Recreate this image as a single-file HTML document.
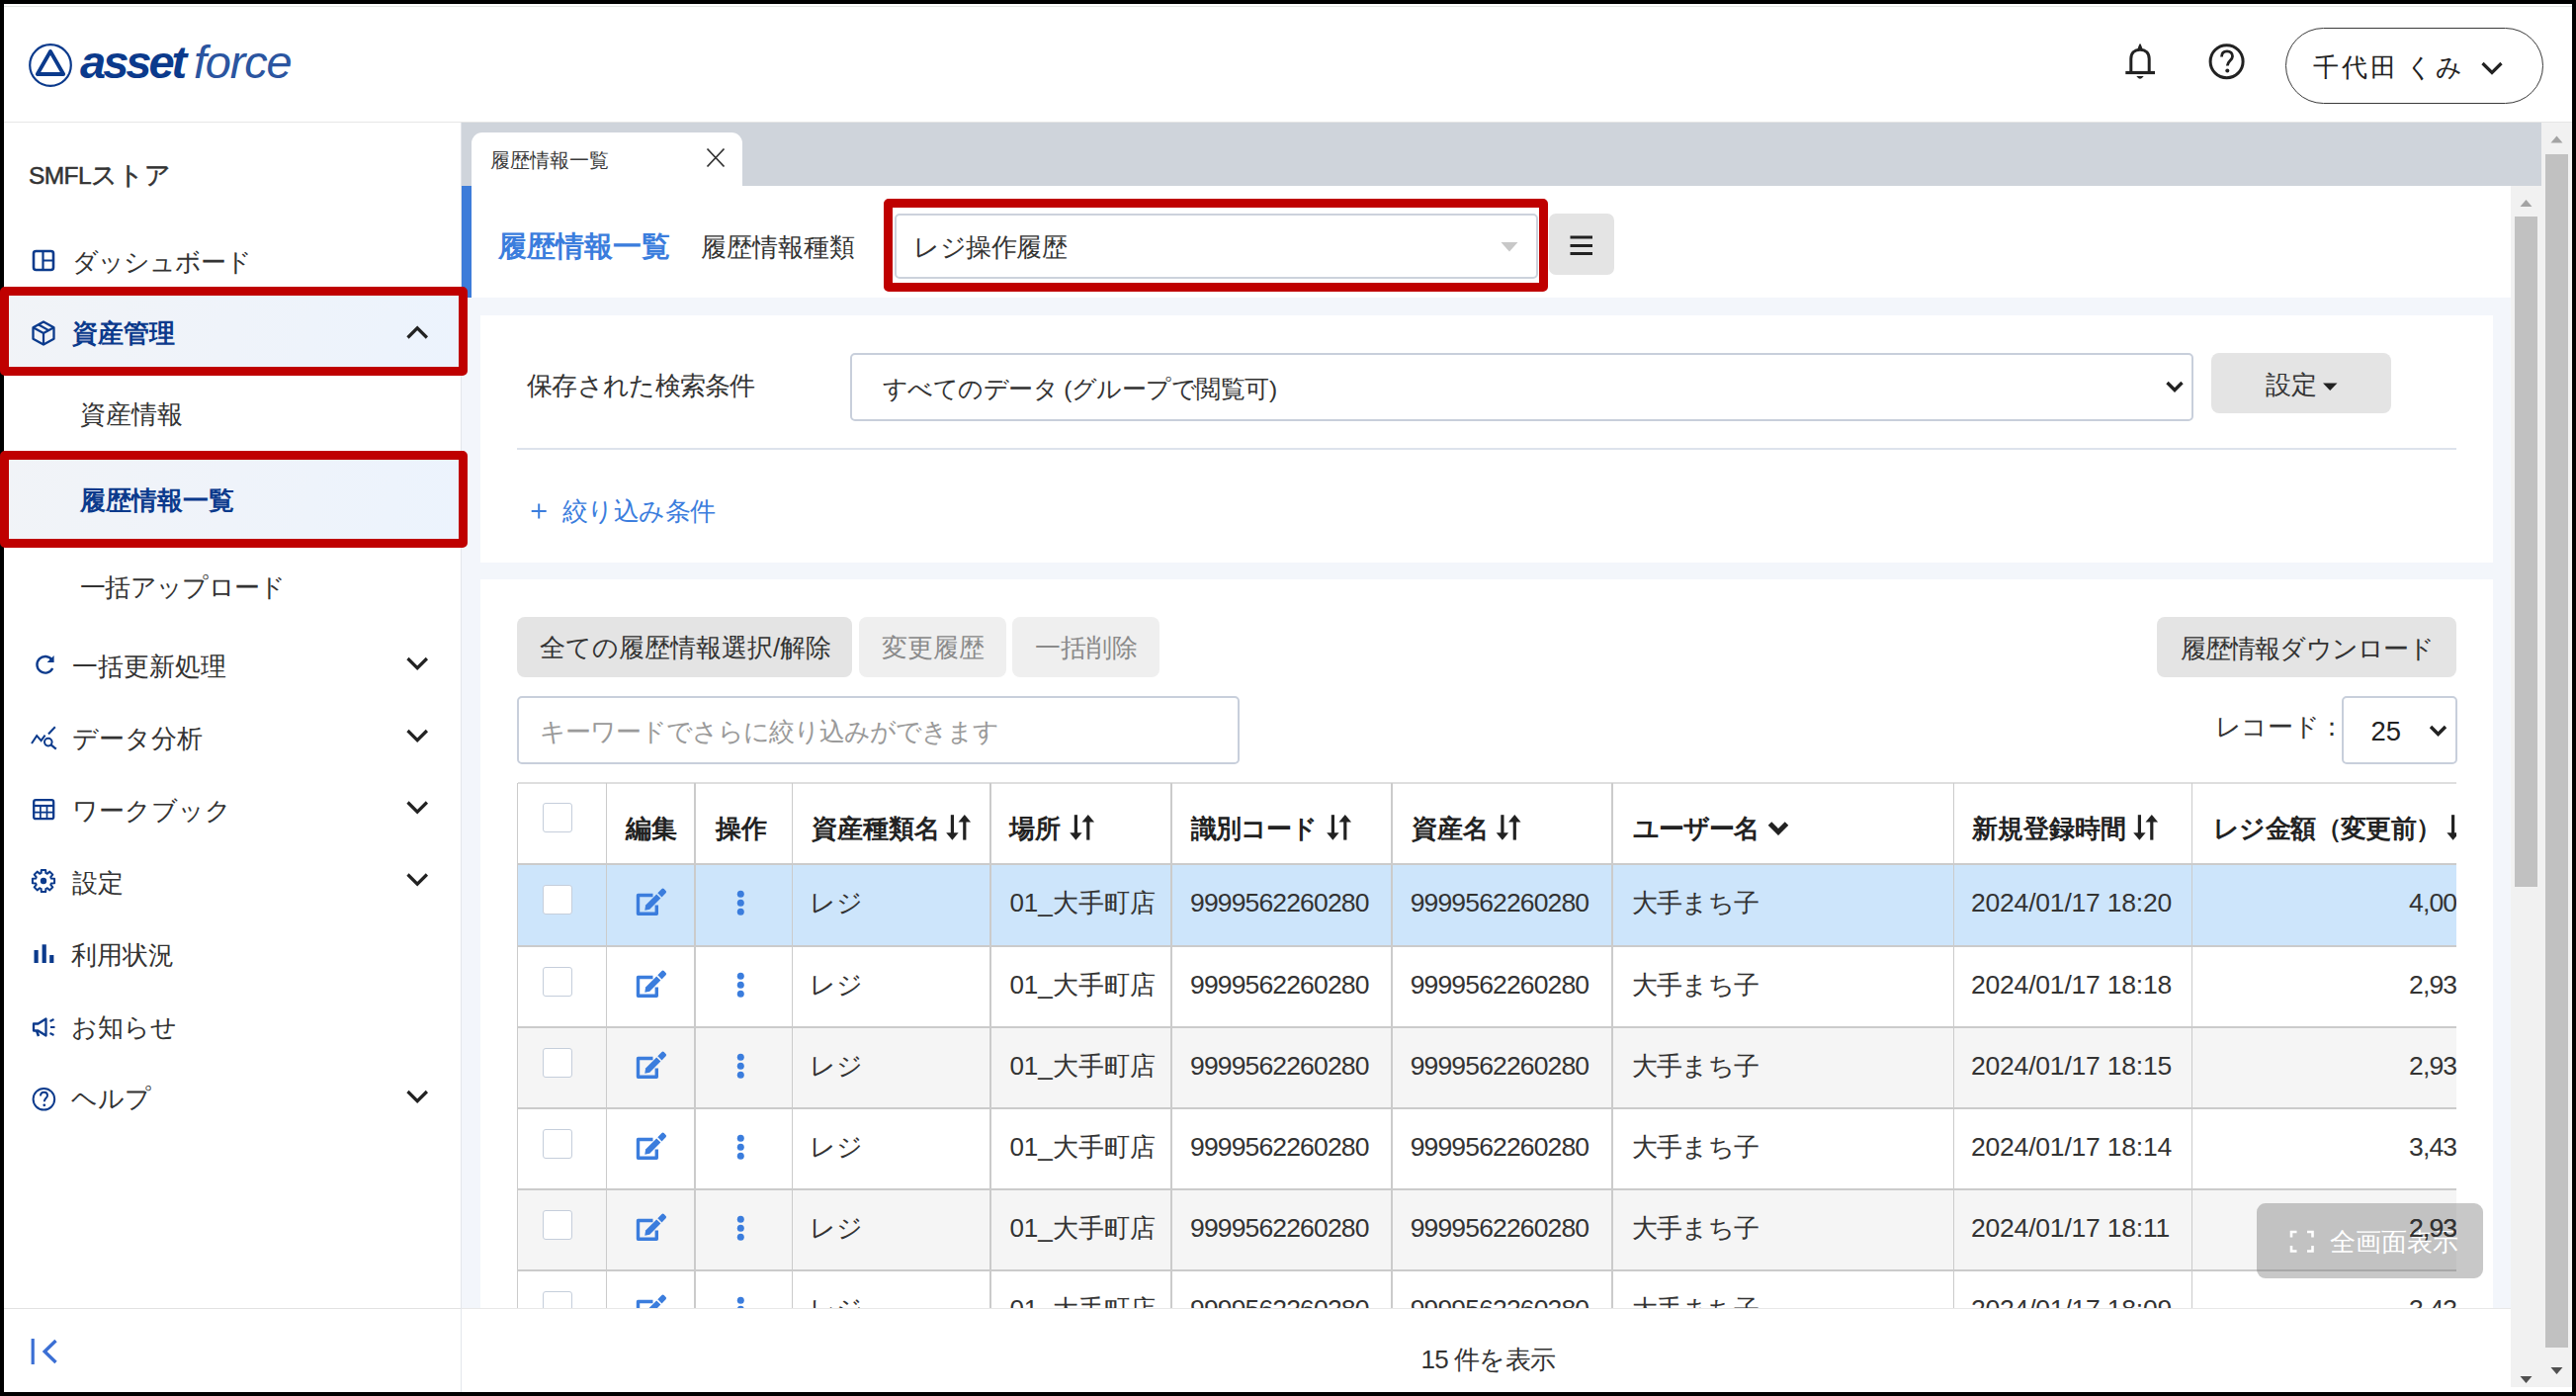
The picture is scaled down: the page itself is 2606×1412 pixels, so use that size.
<!DOCTYPE html>
<html lang="ja">
<head>
<meta charset="utf-8">
<style>
html,body{margin:0;padding:0;}
body{width:2606px;height:1412px;background:#000;position:relative;overflow:hidden;font-family:"Liberation Sans",sans-serif;color:#333;}
.a{position:absolute;}
.t{position:absolute;white-space:nowrap;font-size:26px;line-height:40px;height:40px;}
#app{left:4px;top:4px;width:2598px;height:1404px;background:#fff;overflow:hidden;}
.navy{color:#0b3a8c;}
.blue{color:#3b7ddd;}
.b{font-weight:bold;}
svg{position:absolute;overflow:visible;}
</style>
</head>
<body>
<div id="app" class="a"></div>
<!-- top faint line -->
<div class="a" style="left:4px;top:6px;width:2598px;height:1px;background:#e3e6e3"></div>
<!-- header bottom line -->
<div class="a" style="left:4px;top:123px;width:2598px;height:1px;background:#e6e6e6"></div>

<!-- HEADER -->
<div id="header">
  <svg style="left:0;top:0" width="100" height="100">
    <circle cx="51" cy="66" r="20.8" fill="none" stroke="#0b3a8c" stroke-width="2.2"/>
    <path d="M51 52 L37.8 75 L64.2 75 Z" fill="none" stroke="#0b3a8c" stroke-width="3.8" stroke-linejoin="round"/>
  </svg>
  <div class="t navy" id="lg1" style="left:81px;top:38px;font-size:47px;line-height:50px;height:50px;font-weight:bold;font-style:italic;letter-spacing:-3px">asset</div>
  <div class="t" id="lg2" style="color:#2b55a0;left:196px;top:38px;font-size:47px;line-height:50px;height:50px;font-style:italic;letter-spacing:-1.2px">force</div>

  <!-- bell -->
  <svg style="left:2140px;top:35px" width="50" height="50">
    <path d="M15.8 37 V24.5 C15.8 18.2 19.6 15.2 25 15.2 C30.4 15.2 34.2 18.2 34.2 24.5 V37" fill="none" stroke="#222" stroke-width="3"/>
    <path d="M10.3 38.5 H40" stroke="#222" stroke-width="3.2"/>
    <path d="M23.2 14.5 L25 10 L26.8 14.5 Z" fill="#222" stroke="#222" stroke-width="1.5" stroke-linejoin="round"/>
    <path d="M22.6 42.6 Q25 45.6 27.4 42.6 Z" fill="#222" stroke="#222" stroke-width="1.2"/>
  </svg>
  <!-- help -->
  <svg style="left:2230px;top:40px" width="50" height="50">
    <circle cx="22.6" cy="22.2" r="16.5" fill="none" stroke="#222" stroke-width="3"/>
    <path d="M17.5 17.5 C17.5 13.5 20 11.8 23 11.8 C26.5 11.8 28.5 14 28.5 17 C28.5 21 23.3 21.5 23.3 26.5" fill="none" stroke="#222" stroke-width="2.8"/>
    <circle cx="23.3" cy="31.5" r="2" fill="#222"/>
  </svg>
  <!-- user pill -->
  <div class="a" style="left:2312px;top:28px;width:259px;height:74.5px;border:1.6px solid #3a3a3a;border-radius:40px"></div>
  <div class="t" style="left:2340px;top:48px;color:#222"><span style="letter-spacing:3px">千代田</span><span style="display:inline-block;width:6.5px"></span><span style="letter-spacing:3px">くみ</span></div>
  <svg style="left:2500px;top:55px" width="40" height="30">
    <path d="M11.5 9 L21 18.5 L30.5 9" fill="none" stroke="#222" stroke-width="3.2"/>
  </svg>
</div>

<!-- SIDEBAR -->
<div id="sidebar">
  <div class="a" style="left:466px;top:124px;width:1px;height:1284px;background:#e3e6eb"></div>
  <div class="a" style="left:4px;top:1322.5px;width:462px;height:1px;background:#e2e2e2"></div>
  <div class="t" style="left:29px;top:157px;color:#333;-webkit-text-stroke:0.5px #333"><span style="font-size:24.5px;letter-spacing:-0.6px">SMFL</span>ストア</div>

  <!-- dashboard -->
  <svg style="left:0;top:0" width="1" height="1">
    <rect x="34" y="254" width="20" height="19" rx="2.5" fill="none" stroke="#0b3a8c" stroke-width="2.6"/>
    <path d="M43.5 254 V273 M43.5 263.5 H54" stroke="#0b3a8c" stroke-width="2.2"/>
  </svg>
  <div class="t" style="left:73px;top:244.5px;letter-spacing:-1px">ダッシュボード</div>

  <!-- active parent -->
  <div class="a" style="left:4px;top:290px;width:462px;height:90px;background:linear-gradient(100deg,#f1f3f7 0%,#eff3fa 50%,#ecf3fd 100%)"></div>
  <svg style="left:0;top:0" width="1" height="1">
    <path d="M44 325.5 L54.5 331.2 V342.8 L44 348.5 L33.5 342.8 V331.2 Z" fill="none" stroke="#0b3a8c" stroke-width="2.3" stroke-linejoin="round"/>
    <path d="M33.5 331.2 L44 337 L54.5 331.2 M44 337 V348.5 M38.8 328.3 L49.2 334.1" fill="none" stroke="#0b3a8c" stroke-width="2.2"/>
  </svg>
  <div class="t b navy" style="left:73px;top:317px">資産管理</div>
  <svg style="left:0;top:0" width="1" height="1">
    <path d="M412.5 341.5 L422.2 331.8 L431.9 341.5" fill="none" stroke="#222" stroke-width="3.2"/>
  </svg>

  <div class="t" style="left:81px;top:398.5px">資産情報</div>
  <div class="a" style="left:4px;top:456px;width:462px;height:98px;background:linear-gradient(100deg,#f1f3f7 0%,#eff3fa 50%,#ecf3fd 100%)"></div>
  <div class="t b navy" style="left:81px;top:486px">履歴情報一覧</div>
  <div class="t" style="left:81px;top:573.5px;letter-spacing:-0.7px">一括アップロード</div>

  <!-- refresh -->
  <svg style="left:0;top:0" width="1" height="1">
    <path d="M52.5 667.5 A8.3 8.3 0 1 0 53.2 676" fill="none" stroke="#0b3a8c" stroke-width="2.4"/>
    <path d="M54.6 663 V670 H47.6 Z" fill="#0b3a8c"/>
  </svg>
  <div class="t" style="left:73px;top:654px">一括更新処理</div>
  <!-- analytics -->
  <svg style="left:0;top:0" width="1" height="1">
    <path d="M32 752 L37.2 744.2 L41.6 749.2 L45.6 743.6" fill="none" stroke="#0b3a8c" stroke-width="2" stroke-linejoin="miter"/>
    <path d="M49 742.5 L55.8 735.2" fill="none" stroke="#0b3a8c" stroke-width="2"/>
    <circle cx="48.8" cy="750.6" r="3.8" fill="none" stroke="#0b3a8c" stroke-width="2"/>
    <path d="M51.6 753.4 L56.8 757.6" stroke="#0b3a8c" stroke-width="2.2"/>
  </svg>
  <div class="t" style="left:73px;top:727px">データ分析</div>
  <!-- workbook -->
  <svg style="left:0;top:0" width="1" height="1">
    <rect x="34.2" y="809.2" width="20" height="19" rx="2" fill="none" stroke="#0b3a8c" stroke-width="2.3"/>
    <path d="M34.2 815 H54.2" stroke="#0b3a8c" stroke-width="2.2"/>
    <path d="M34.2 821.6 H54.2 M40.9 815 V828.2 M47.5 815 V828.2" stroke="#0b3a8c" stroke-width="1.7"/>
  </svg>
  <div class="t" style="left:73px;top:799.5px">ワークブック</div>
  <!-- gear -->
  <svg style="left:0;top:0" width="1" height="1">
    <g transform="translate(44,891)">
      <path d="M-3.14 -7.58 L-2.40 -7.84 L-2.16 -11.09 L2.16 -11.09 L2.40 -7.84 L3.14 -7.58 L3.85 -7.24 L6.32 -9.37 L9.37 -6.32 L7.24 -3.85 L7.58 -3.14 L7.84 -2.40 L11.09 -2.16 L11.09 2.16 L7.84 2.40 L7.58 3.14 L7.24 3.85 L9.37 6.32 L6.32 9.37 L3.85 7.24 L3.14 7.58 L2.40 7.84 L2.16 11.09 L-2.16 11.09 L-2.40 7.84 L-3.14 7.58 L-3.85 7.24 L-6.32 9.37 L-9.37 6.32 L-7.24 3.85 L-7.58 3.14 L-7.84 2.40 L-11.09 2.16 L-11.09 -2.16 L-7.84 -2.40 L-7.58 -3.14 L-7.24 -3.85 L-9.37 -6.32 L-6.32 -9.37 L-3.85 -7.24 Z" fill="none" stroke="#0b3a8c" stroke-width="2" stroke-linejoin="round"/>
      <circle cx="0" cy="0" r="3.2" fill="#0b3a8c"/>
    </g>
  </svg>
  <div class="t" style="left:73px;top:872.5px">設定</div>
  <!-- bar chart -->
  <svg style="left:0;top:0" width="1" height="1">
    <rect x="34.5" y="961" width="4.2" height="13" fill="#0b3a8c"/>
    <rect x="42.6" y="955.3" width="4.2" height="18.7" fill="#0b3a8c"/>
    <rect x="50.2" y="966" width="4.2" height="8" fill="#0b3a8c"/>
  </svg>
  <div class="t" style="left:72px;top:945.7px">利用状況</div>
  <!-- megaphone -->
  <svg style="left:0;top:0" width="1" height="1">
    <path d="M34 1035.5 H38.5 L46.5 1030.5 V1047.5 L38.5 1042.5 H34 Z" fill="none" stroke="#0b3a8c" stroke-width="2.3" stroke-linejoin="round"/>
    <path d="M37 1042.5 L39 1048" stroke="#0b3a8c" stroke-width="2.5"/>
    <path d="M50.5 1033 L54.5 1031 M51 1039 H55.5 M50.5 1045 L54.5 1047" stroke="#0b3a8c" stroke-width="2"/>
  </svg>
  <div class="t" style="left:72px;top:1019px">お知らせ</div>
  <!-- help -->
  <svg style="left:0;top:0" width="1" height="1">
    <circle cx="44.4" cy="1111.8" r="10.8" fill="none" stroke="#0b3a8c" stroke-width="2"/>
    <path d="M41 1108.5 C41 1105.8 42.6 1104.7 44.5 1104.7 C46.8 1104.7 48 1106.2 48 1108 C48 1110.7 44.8 1111 44.8 1114.2" fill="none" stroke="#0b3a8c" stroke-width="2"/>
    <circle cx="44.8" cy="1117.8" r="1.4" fill="#0b3a8c"/>
  </svg>
  <div class="t" style="left:72px;top:1091px">ヘルプ</div>

  <!-- chevrons -->
  <svg style="left:0;top:0" width="1" height="1">
    <g fill="none" stroke="#222" stroke-width="3.2">
      <path d="M412.5 666 L422.2 675.7 L431.9 666"/>
      <path d="M412.5 739 L422.2 748.7 L431.9 739"/>
      <path d="M412.5 811.5 L422.2 821.2 L431.9 811.5"/>
      <path d="M412.5 884.5 L422.2 894.2 L431.9 884.5"/>
      <path d="M412.5 1104 L422.2 1113.7 L431.9 1104"/>
    </g>
  </svg>
  <!-- collapse -->
  <svg style="left:0;top:0" width="1" height="1">
    <path d="M33.2 1354 V1380" stroke="#3b6fd4" stroke-width="3.2"/>
    <path d="M56.5 1356 L45.2 1367 L56.5 1378" fill="none" stroke="#3b6fd4" stroke-width="3.4"/>
  </svg>

</div>

<!-- MAIN -->
<div id="main">
  <!-- tab bar -->
  <div class="a" style="left:467px;top:124px;width:2104px;height:64px;background:#cfd4db"></div>
  <div class="a" style="left:477px;top:133.5px;width:274px;height:55px;background:#fff;border-radius:11px 11px 0 0"></div>
  <div class="t" style="left:495.5px;top:142px;font-size:20px;color:#3a3a3a">履歴情報一覧</div>
  <svg style="left:0;top:0" width="1" height="1">
    <path d="M715.5 150.5 L732.5 168.5 M732.5 150.5 L715.5 168.5" stroke="#333" stroke-width="1.8"/>
  </svg>

  <!-- content bg -->
  <div class="a" style="left:467px;top:188px;width:2073px;height:1135px;background:#f3f6fb"></div>
  <!-- page header -->
  <div class="a" style="left:467px;top:188px;width:2073px;height:113px;background:#fff"></div>
  <div class="a" style="left:467px;top:188px;width:10px;height:113px;background:#3d7cd9"></div>
  <div class="t b blue" style="left:504px;top:229px;font-size:29px">履歴情報一覧</div>
  <div class="t" style="left:709px;top:230px;color:#333">履歴情報種類</div>
  <div class="a" style="left:905px;top:216px;width:646.5px;height:61.5px;border:2px solid #ccd2dc;border-radius:5px;background:#fff"></div>
  <div class="t" style="left:924px;top:230px;color:#333;letter-spacing:-0.5px">レジ操作履歴</div>
  <svg style="left:0;top:0" width="1" height="1">
    <path d="M1518.5 245 H1535.5 L1527 254.5 Z" fill="#c8c8c8"/>
  </svg>
  <div class="a" style="left:894px;top:201px;width:654px;height:76px;border:9px solid #bf0000;border-radius:5px"></div>
  <div class="a" style="left:1567px;top:216px;width:66px;height:62px;background:#e4e4e4;border-radius:7px"></div>
  <svg style="left:0;top:0" width="1" height="1">
    <path d="M1588.5 240 H1611 M1588.5 248.5 H1611 M1588.5 256.5 H1611" stroke="#222" stroke-width="3.2"/>
  </svg>

  <!-- card 1 -->
  <div class="a" style="left:486px;top:319px;width:2036px;height:250px;background:#fff"></div>
  <div class="t" style="left:533px;top:370px;color:#333;letter-spacing:-0.7px">保存された検索条件</div>
  <div class="a" style="left:860px;top:357px;width:1355px;height:65px;border:2px solid #c8cfdb;border-radius:5px;background:#fff"></div>
  <div class="t" style="left:892.5px;top:374px;color:#333;font-size:24.5px;letter-spacing:-0.5px">すべてのデータ (グループで閲覧可)</div>
  <svg style="left:0;top:0" width="1" height="1">
    <path d="M2192.5 387 L2200 394.5 L2207.5 387" fill="none" stroke="#222" stroke-width="3.4"/>
  </svg>
  <div class="a" style="left:2237px;top:357px;width:182px;height:61px;background:#e4e4e4;border-radius:8px"></div>
  <div class="t" style="left:2292px;top:369px;color:#333">設定</div>
  <svg style="left:0;top:0" width="1" height="1">
    <path d="M2350 387.5 H2364.5 L2357.2 395 Z" fill="#222"/>
  </svg>
  <div class="a" style="left:522.5px;top:453px;width:1962.5px;height:1.5px;background:#dde3ec"></div>
  <svg style="left:0;top:0" width="1" height="1">
    <path d="M545.2 509.5 V524.6 M537.7 517 H552.7" stroke="#3b7ddd" stroke-width="2"/>
  </svg>
  <div class="t blue" style="left:569px;top:496.5px;letter-spacing:-0.6px">絞り込み条件</div>

  <!-- card 2 -->
  <div class="a" style="left:486px;top:586px;width:2036px;height:737px;background:#fff"></div>
  <div class="a" style="left:523px;top:624px;width:339px;height:61px;background:#e4e4e4;border-radius:8px"></div>
  <div class="t" style="left:546px;top:635px;color:#333">全ての履歴情報選択/解除</div>
  <div class="a" style="left:869px;top:624px;width:149px;height:61px;background:#efefef;border-radius:8px"></div>
  <div class="t" style="left:891.5px;top:635px;color:#8a8a8a">変更履歴</div>
  <div class="a" style="left:1024px;top:624px;width:149px;height:61px;background:#efefef;border-radius:8px"></div>
  <div class="t" style="left:1046.5px;top:635px;color:#8a8a8a">一括削除</div>
  <div class="a" style="left:2182px;top:623.5px;width:303px;height:61px;background:#e4e4e4;border-radius:8px"></div>
  <div class="t" style="left:2205.5px;top:636px;color:#333;letter-spacing:-0.8px">履歴情報ダウンロード</div>

  <div class="a" style="left:523px;top:704px;width:726.8px;height:64.8px;border:2px solid #c8cfdb;border-radius:5px;background:#fff"></div>
  <div class="t" style="left:546px;top:720px;color:#9a9a9a;letter-spacing:-1px">キーワードでさらに絞り込みができます</div>
  <div class="t" style="left:2240.5px;top:715px;color:#333;letter-spacing:-0.3px">レコード：</div>
  <div class="a" style="left:2369px;top:704px;width:112.8px;height:64.8px;border:2px solid #c8cfdb;border-radius:5px;background:#fff"></div>
  <div class="t" style="left:2398.5px;top:719.5px;color:#222;font-size:27.4px">25</div>
  <svg style="left:0;top:0" width="1" height="1">
    <path d="M2459 735 L2466.5 742.5 L2474 735" fill="none" stroke="#222" stroke-width="3.4"/>
  </svg>

  <!-- TABLE -->
  <div id="tbl" class="a" style="left:523px;top:791px;width:1962px;height:532px;overflow:hidden">
<div class="a" style="left:0.6px;top:1.0px;width:2000.0px;height:82.0px;background:#fff"></div>
<div class="a" style="left:0.6px;top:83.0px;width:2000.0px;height:83.0px;background:#cde5fb"></div>
<div class="a" style="left:0.6px;top:166.0px;width:2000.0px;height:82.0px;background:#fff"></div>
<div class="a" style="left:0.6px;top:248.0px;width:2000.0px;height:82.0px;background:#f5f5f5"></div>
<div class="a" style="left:0.6px;top:330.0px;width:2000.0px;height:82.0px;background:#fff"></div>
<div class="a" style="left:0.6px;top:412.0px;width:2000.0px;height:82.0px;background:#f5f5f5"></div>
<div class="a" style="left:0.6px;top:494.0px;width:2000.0px;height:82.0px;background:#fff"></div>
<div class="a" style="left:0.6px;top:0.2px;width:2000.0px;height:1.5px;background:#dedede"></div>
<div class="a" style="left:0.6px;top:82.2px;width:2000.0px;height:1.5px;background:#cbcbcb"></div>
<div class="a" style="left:0.6px;top:165.2px;width:2000.0px;height:1.5px;background:#cbcbcb"></div>
<div class="a" style="left:0.6px;top:247.2px;width:2000.0px;height:1.5px;background:#cbcbcb"></div>
<div class="a" style="left:0.6px;top:329.2px;width:2000.0px;height:1.5px;background:#cbcbcb"></div>
<div class="a" style="left:0.6px;top:411.2px;width:2000.0px;height:1.5px;background:#cbcbcb"></div>
<div class="a" style="left:0.6px;top:493.2px;width:2000.0px;height:1.5px;background:#cbcbcb"></div>
<div class="a" style="left:0.6px;top:575.2px;width:2000.0px;height:1.5px;background:#cbcbcb"></div>
<div class="a" style="left:-0.1px;top:1.0px;width:1.5px;height:700.0px;background:#cbcbcb"></div>
<div class="a" style="left:89.5px;top:1.0px;width:1.5px;height:700.0px;background:#cbcbcb"></div>
<div class="a" style="left:179.0px;top:1.0px;width:1.5px;height:700.0px;background:#cbcbcb"></div>
<div class="a" style="left:277.5px;top:1.0px;width:1.5px;height:700.0px;background:#cbcbcb"></div>
<div class="a" style="left:478.2px;top:1.0px;width:1.5px;height:700.0px;background:#cbcbcb"></div>
<div class="a" style="left:661.2px;top:1.0px;width:1.5px;height:700.0px;background:#cbcbcb"></div>
<div class="a" style="left:884.2px;top:1.0px;width:1.5px;height:700.0px;background:#cbcbcb"></div>
<div class="a" style="left:1107.0px;top:1.0px;width:1.5px;height:700.0px;background:#cbcbcb"></div>
<div class="a" style="left:1452.5px;top:1.0px;width:1.5px;height:700.0px;background:#cbcbcb"></div>
<div class="a" style="left:1693.8px;top:1.0px;width:1.5px;height:700.0px;background:#cbcbcb"></div>
<div class="a" style="left:26.0px;top:21.0px;width:30.0px;height:30.0px;border:1.5px solid #c5cedb;border-radius:3px;box-sizing:border-box;background:#fff"></div>
<div class="t" style="left:110.3px;top:27.0px;font-weight:bold;color:#222">編集</div>
<div class="t" style="left:200.5px;top:27.0px;font-weight:bold;color:#222">操作</div>
<div class="t" style="left:297.6px;top:27.0px;font-weight:bold;color:#222">資産種類名</div>
<div class="t" style="left:498.4px;top:27.0px;font-weight:bold;color:#222">場所</div>
<div class="t" style="left:682.0px;top:27.0px;font-weight:bold;color:#222;letter-spacing:-1px">識別コード</div>
<div class="t" style="left:904.7px;top:27.0px;font-weight:bold;color:#222">資産名</div>
<div class="t" style="left:1128.5px;top:27.0px;font-weight:bold;color:#222;letter-spacing:-0.8px">ユーザー名</div>
<div class="t" style="left:1472.0px;top:27.0px;font-weight:bold;color:#222">新規登録時間</div>
<div class="t" style="left:1716.0px;top:27.0px;font-weight:bold;color:#222;letter-spacing:-0.6px">レジ金額（変更前）</div>
<svg style="left:-523px;top:-791px" width="1" height="1"><g transform="translate(0.0,0)" fill="#222"><rect x="961.8" y="824.2" width="3.2" height="20"/><path d="M957.2 842.3 H969.6 L963.4 849.8 Z"/><rect x="974.2" y="830" width="3.2" height="19.6"/><path d="M969.5 831.6 H982.1 L975.8 824 Z"/></g></svg>
<svg style="left:-523px;top:-791px" width="1" height="1"><g transform="translate(125.0,0)" fill="#222"><rect x="961.8" y="824.2" width="3.2" height="20"/><path d="M957.2 842.3 H969.6 L963.4 849.8 Z"/><rect x="974.2" y="830" width="3.2" height="19.6"/><path d="M969.5 831.6 H982.1 L975.8 824 Z"/></g></svg>
<svg style="left:-523px;top:-791px" width="1" height="1"><g transform="translate(385.0,0)" fill="#222"><rect x="961.8" y="824.2" width="3.2" height="20"/><path d="M957.2 842.3 H969.6 L963.4 849.8 Z"/><rect x="974.2" y="830" width="3.2" height="19.6"/><path d="M969.5 831.6 H982.1 L975.8 824 Z"/></g></svg>
<svg style="left:-523px;top:-791px" width="1" height="1"><g transform="translate(556.5,0)" fill="#222"><rect x="961.8" y="824.2" width="3.2" height="20"/><path d="M957.2 842.3 H969.6 L963.4 849.8 Z"/><rect x="974.2" y="830" width="3.2" height="19.6"/><path d="M969.5 831.6 H982.1 L975.8 824 Z"/></g></svg>
<svg style="left:-523px;top:-791px" width="1" height="1"><g transform="translate(1201.0,0)" fill="#222"><rect x="961.8" y="824.2" width="3.2" height="20"/><path d="M957.2 842.3 H969.6 L963.4 849.8 Z"/><rect x="974.2" y="830" width="3.2" height="19.6"/><path d="M969.5 831.6 H982.1 L975.8 824 Z"/></g></svg>
<svg style="left:-523px;top:-791px" width="1" height="1"><g fill="#222"><rect x="2480" y="824.2" width="3.2" height="20"/><path d="M2475.4 842.3 H2487.8 L2481.6 849.8 Z"/></g></svg>
<svg style="left:-523px;top:-791px" width="1" height="1"><path d="M1790.5 833 L1799 841.5 L1807.5 833" fill="none" stroke="#222" stroke-width="5" stroke-linejoin="miter"/></svg>
<div class="a" style="left:26.0px;top:103.5px;width:30.0px;height:30.0px;border:1.5px solid #c5cedb;border-radius:3px;box-sizing:border-box;background:#fff"></div>
<svg style="left:-523px;top:-791px" width="1" height="1"><g transform="translate(0,0)"><path d="M660.5 905.5 H645.5 V924.3 H664.3 V915.5" fill="none" stroke="#3b7ddd" stroke-width="3.4" stroke-linejoin="round"/><path d="M652.3 920.8 L653.1 915.5 L664.2 904.4 L668.4 908.6 L657.3 919.7 Z" fill="#3b7ddd"/><path d="M665.3 903.3 L669.5 899.1 Q670.6 898 671.7 899.1 L673.6 901 Q674.7 902.1 673.6 903.2 L669.5 907.5 Z" fill="#3b7ddd"/></g></svg>
<svg style="left:-523px;top:-791px" width="1" height="1"><g fill="#3b7ddd"><circle cx="749.3" cy="904.3" r="3.5"/><circle cx="749.3" cy="913.3" r="3.5"/><circle cx="749.3" cy="922.2" r="3.5"/></g></svg>
<div class="t" style="left:296.0px;top:102.0px;color:#333">レジ</div>
<div class="t" style="left:498.4px;top:102.0px;color:#333">01_大手町店</div>
<div class="t" style="left:681.0px;top:102.0px;color:#333;font-size:26.5px;letter-spacing:-0.85px">9999562260280</div>
<div class="t" style="left:903.7px;top:102.0px;color:#333;font-size:26.5px;letter-spacing:-0.85px">9999562260280</div>
<div class="t" style="left:1127.5px;top:102.0px;color:#333;letter-spacing:-0.6px">大手まち子</div>
<div class="t" style="left:1471.0px;top:102.0px;color:#333;font-size:26.5px;letter-spacing:-0.2px">2024/01/17 18:20</div>
<div class="t" style="left:1914.0px;top:102.0px;color:#333;font-size:26.5px;letter-spacing:-0.85px">4,000</div>
<div class="a" style="left:26.0px;top:186.5px;width:30.0px;height:30.0px;border:1.5px solid #c5cedb;border-radius:3px;box-sizing:border-box;background:#fff"></div>
<svg style="left:-523px;top:-791px" width="1" height="1"><g transform="translate(0,83)"><path d="M660.5 905.5 H645.5 V924.3 H664.3 V915.5" fill="none" stroke="#3b7ddd" stroke-width="3.4" stroke-linejoin="round"/><path d="M652.3 920.8 L653.1 915.5 L664.2 904.4 L668.4 908.6 L657.3 919.7 Z" fill="#3b7ddd"/><path d="M665.3 903.3 L669.5 899.1 Q670.6 898 671.7 899.1 L673.6 901 Q674.7 902.1 673.6 903.2 L669.5 907.5 Z" fill="#3b7ddd"/></g></svg>
<svg style="left:-523px;top:-791px" width="1" height="1"><g fill="#3b7ddd"><circle cx="749.3" cy="987.3" r="3.5"/><circle cx="749.3" cy="996.3" r="3.5"/><circle cx="749.3" cy="1005.2" r="3.5"/></g></svg>
<div class="t" style="left:296.0px;top:185.0px;color:#333">レジ</div>
<div class="t" style="left:498.4px;top:185.0px;color:#333">01_大手町店</div>
<div class="t" style="left:681.0px;top:185.0px;color:#333;font-size:26.5px;letter-spacing:-0.85px">9999562260280</div>
<div class="t" style="left:903.7px;top:185.0px;color:#333;font-size:26.5px;letter-spacing:-0.85px">9999562260280</div>
<div class="t" style="left:1127.5px;top:185.0px;color:#333;letter-spacing:-0.6px">大手まち子</div>
<div class="t" style="left:1471.0px;top:185.0px;color:#333;font-size:26.5px;letter-spacing:-0.2px">2024/01/17 18:18</div>
<div class="t" style="left:1914.0px;top:185.0px;color:#333;font-size:26.5px;letter-spacing:-0.85px">2,930</div>
<div class="a" style="left:26.0px;top:268.5px;width:30.0px;height:30.0px;border:1.5px solid #c5cedb;border-radius:3px;box-sizing:border-box;background:#fff"></div>
<svg style="left:-523px;top:-791px" width="1" height="1"><g transform="translate(0,165)"><path d="M660.5 905.5 H645.5 V924.3 H664.3 V915.5" fill="none" stroke="#3b7ddd" stroke-width="3.4" stroke-linejoin="round"/><path d="M652.3 920.8 L653.1 915.5 L664.2 904.4 L668.4 908.6 L657.3 919.7 Z" fill="#3b7ddd"/><path d="M665.3 903.3 L669.5 899.1 Q670.6 898 671.7 899.1 L673.6 901 Q674.7 902.1 673.6 903.2 L669.5 907.5 Z" fill="#3b7ddd"/></g></svg>
<svg style="left:-523px;top:-791px" width="1" height="1"><g fill="#3b7ddd"><circle cx="749.3" cy="1069.3" r="3.5"/><circle cx="749.3" cy="1078.3" r="3.5"/><circle cx="749.3" cy="1087.2" r="3.5"/></g></svg>
<div class="t" style="left:296.0px;top:267.0px;color:#333">レジ</div>
<div class="t" style="left:498.4px;top:267.0px;color:#333">01_大手町店</div>
<div class="t" style="left:681.0px;top:267.0px;color:#333;font-size:26.5px;letter-spacing:-0.85px">9999562260280</div>
<div class="t" style="left:903.7px;top:267.0px;color:#333;font-size:26.5px;letter-spacing:-0.85px">9999562260280</div>
<div class="t" style="left:1127.5px;top:267.0px;color:#333;letter-spacing:-0.6px">大手まち子</div>
<div class="t" style="left:1471.0px;top:267.0px;color:#333;font-size:26.5px;letter-spacing:-0.2px">2024/01/17 18:15</div>
<div class="t" style="left:1914.0px;top:267.0px;color:#333;font-size:26.5px;letter-spacing:-0.85px">2,930</div>
<div class="a" style="left:26.0px;top:350.5px;width:30.0px;height:30.0px;border:1.5px solid #c5cedb;border-radius:3px;box-sizing:border-box;background:#fff"></div>
<svg style="left:-523px;top:-791px" width="1" height="1"><g transform="translate(0,247)"><path d="M660.5 905.5 H645.5 V924.3 H664.3 V915.5" fill="none" stroke="#3b7ddd" stroke-width="3.4" stroke-linejoin="round"/><path d="M652.3 920.8 L653.1 915.5 L664.2 904.4 L668.4 908.6 L657.3 919.7 Z" fill="#3b7ddd"/><path d="M665.3 903.3 L669.5 899.1 Q670.6 898 671.7 899.1 L673.6 901 Q674.7 902.1 673.6 903.2 L669.5 907.5 Z" fill="#3b7ddd"/></g></svg>
<svg style="left:-523px;top:-791px" width="1" height="1"><g fill="#3b7ddd"><circle cx="749.3" cy="1151.3" r="3.5"/><circle cx="749.3" cy="1160.3" r="3.5"/><circle cx="749.3" cy="1169.2" r="3.5"/></g></svg>
<div class="t" style="left:296.0px;top:349.0px;color:#333">レジ</div>
<div class="t" style="left:498.4px;top:349.0px;color:#333">01_大手町店</div>
<div class="t" style="left:681.0px;top:349.0px;color:#333;font-size:26.5px;letter-spacing:-0.85px">9999562260280</div>
<div class="t" style="left:903.7px;top:349.0px;color:#333;font-size:26.5px;letter-spacing:-0.85px">9999562260280</div>
<div class="t" style="left:1127.5px;top:349.0px;color:#333;letter-spacing:-0.6px">大手まち子</div>
<div class="t" style="left:1471.0px;top:349.0px;color:#333;font-size:26.5px;letter-spacing:-0.2px">2024/01/17 18:14</div>
<div class="t" style="left:1914.0px;top:349.0px;color:#333;font-size:26.5px;letter-spacing:-0.85px">3,430</div>
<div class="a" style="left:26.0px;top:432.5px;width:30.0px;height:30.0px;border:1.5px solid #c5cedb;border-radius:3px;box-sizing:border-box;background:#fff"></div>
<svg style="left:-523px;top:-791px" width="1" height="1"><g transform="translate(0,329)"><path d="M660.5 905.5 H645.5 V924.3 H664.3 V915.5" fill="none" stroke="#3b7ddd" stroke-width="3.4" stroke-linejoin="round"/><path d="M652.3 920.8 L653.1 915.5 L664.2 904.4 L668.4 908.6 L657.3 919.7 Z" fill="#3b7ddd"/><path d="M665.3 903.3 L669.5 899.1 Q670.6 898 671.7 899.1 L673.6 901 Q674.7 902.1 673.6 903.2 L669.5 907.5 Z" fill="#3b7ddd"/></g></svg>
<svg style="left:-523px;top:-791px" width="1" height="1"><g fill="#3b7ddd"><circle cx="749.3" cy="1233.3" r="3.5"/><circle cx="749.3" cy="1242.3" r="3.5"/><circle cx="749.3" cy="1251.2" r="3.5"/></g></svg>
<div class="t" style="left:296.0px;top:431.0px;color:#333">レジ</div>
<div class="t" style="left:498.4px;top:431.0px;color:#333">01_大手町店</div>
<div class="t" style="left:681.0px;top:431.0px;color:#333;font-size:26.5px;letter-spacing:-0.85px">9999562260280</div>
<div class="t" style="left:903.7px;top:431.0px;color:#333;font-size:26.5px;letter-spacing:-0.85px">9999562260280</div>
<div class="t" style="left:1127.5px;top:431.0px;color:#333;letter-spacing:-0.6px">大手まち子</div>
<div class="t" style="left:1471.0px;top:431.0px;color:#333;font-size:26.5px;letter-spacing:-0.2px">2024/01/17 18:11</div>
<div class="t" style="left:1914.0px;top:431.0px;color:#333;font-size:26.5px;letter-spacing:-0.85px">2,930</div>
<div class="a" style="left:26.0px;top:514.5px;width:30.0px;height:30.0px;border:1.5px solid #c5cedb;border-radius:3px;box-sizing:border-box;background:#fff"></div>
<svg style="left:-523px;top:-791px" width="1" height="1"><g transform="translate(0,411)"><path d="M660.5 905.5 H645.5 V924.3 H664.3 V915.5" fill="none" stroke="#3b7ddd" stroke-width="3.4" stroke-linejoin="round"/><path d="M652.3 920.8 L653.1 915.5 L664.2 904.4 L668.4 908.6 L657.3 919.7 Z" fill="#3b7ddd"/><path d="M665.3 903.3 L669.5 899.1 Q670.6 898 671.7 899.1 L673.6 901 Q674.7 902.1 673.6 903.2 L669.5 907.5 Z" fill="#3b7ddd"/></g></svg>
<svg style="left:-523px;top:-791px" width="1" height="1"><g fill="#3b7ddd"><circle cx="749.3" cy="1315.3" r="3.5"/><circle cx="749.3" cy="1324.3" r="3.5"/><circle cx="749.3" cy="1333.2" r="3.5"/></g></svg>
<div class="t" style="left:296.0px;top:513.0px;color:#333">レジ</div>
<div class="t" style="left:498.4px;top:513.0px;color:#333">01_大手町店</div>
<div class="t" style="left:681.0px;top:513.0px;color:#333;font-size:26.5px;letter-spacing:-0.85px">9999562260280</div>
<div class="t" style="left:903.7px;top:513.0px;color:#333;font-size:26.5px;letter-spacing:-0.85px">9999562260280</div>
<div class="t" style="left:1127.5px;top:513.0px;color:#333;letter-spacing:-0.6px">大手まち子</div>
<div class="t" style="left:1471.0px;top:513.0px;color:#333;font-size:26.5px;letter-spacing:-0.2px">2024/01/17 18:09</div>
<div class="t" style="left:1914.0px;top:513.0px;color:#333;font-size:26.5px;letter-spacing:-0.85px">3,430</div>

  </div>

  <!-- fullscreen button -->
  <div class="a" style="left:2282.5px;top:1217px;width:229.5px;height:76px;background:rgba(110,110,110,0.38);border-radius:9px"></div>
  <svg style="left:0;top:0" width="1" height="1">
    <path d="M2318 1251.5 V1246 H2323.5 M2334 1246 H2339.5 V1251.5 M2339.5 1260 V1265.5 H2334 M2323.5 1265.5 H2318 V1260" fill="none" stroke="#fff" stroke-width="2.6"/>
  </svg>
  <div class="t" style="left:2356.5px;top:1236px;color:#fff">全画面表示</div>
  <div class="a" style="left:523px;top:791px;width:1962px;height:532px;overflow:hidden"><div class="t" style="left:1914px;top:431px;color:#333;font-size:26.5px;letter-spacing:-0.85px">2,930</div></div>
  <!-- footer -->
  <div class="a" style="left:467px;top:1322.5px;width:2073px;height:84.5px;background:#fff;border-top:1px solid #e8e8e8"></div>
  <div class="t" style="left:1437.5px;top:1355px;color:#333;letter-spacing:-0.8px">15 件を表示</div>

  <!-- scrollbars -->
  <div class="a" style="left:2540px;top:188px;width:31px;height:1215px;background:#f1f1f1"></div>
  <div class="a" style="left:2543.5px;top:219px;width:23.5px;height:678px;background:#c1c1c1"></div>
  <svg style="left:0;top:0" width="1" height="1">
    <path d="M2549.5 209 H2561.5 L2555.5 202 Z" fill="#a3a3a3"/>
    <path d="M2549.5 1392 H2561.5 L2555.5 1399 Z" fill="#505050"/>
  </svg>
  <div class="a" style="left:2571px;top:124px;width:31px;height:1279px;background:#f1f1f1"></div>
  <div class="a" style="left:2575px;top:155.5px;width:23px;height:1207.5px;background:#c1c1c1"></div>
  <svg style="left:0;top:0" width="1" height="1">
    <path d="M2580.5 144.5 H2592.5 L2586.5 137.5 Z" fill="#a3a3a3"/>
    <path d="M2580.5 1383 H2592.5 L2586.5 1390 Z" fill="#505050"/>
  </svg>
</div>

<!-- red highlight boxes -->
  <div class="a" style="left:0;top:290px;width:455px;height:72px;border:9px solid #bf0000;border-radius:5px"></div>
  <div class="a" style="left:0;top:456px;width:455px;height:80px;border:9px solid #bf0000;border-radius:5px"></div>
</body>
</html>
